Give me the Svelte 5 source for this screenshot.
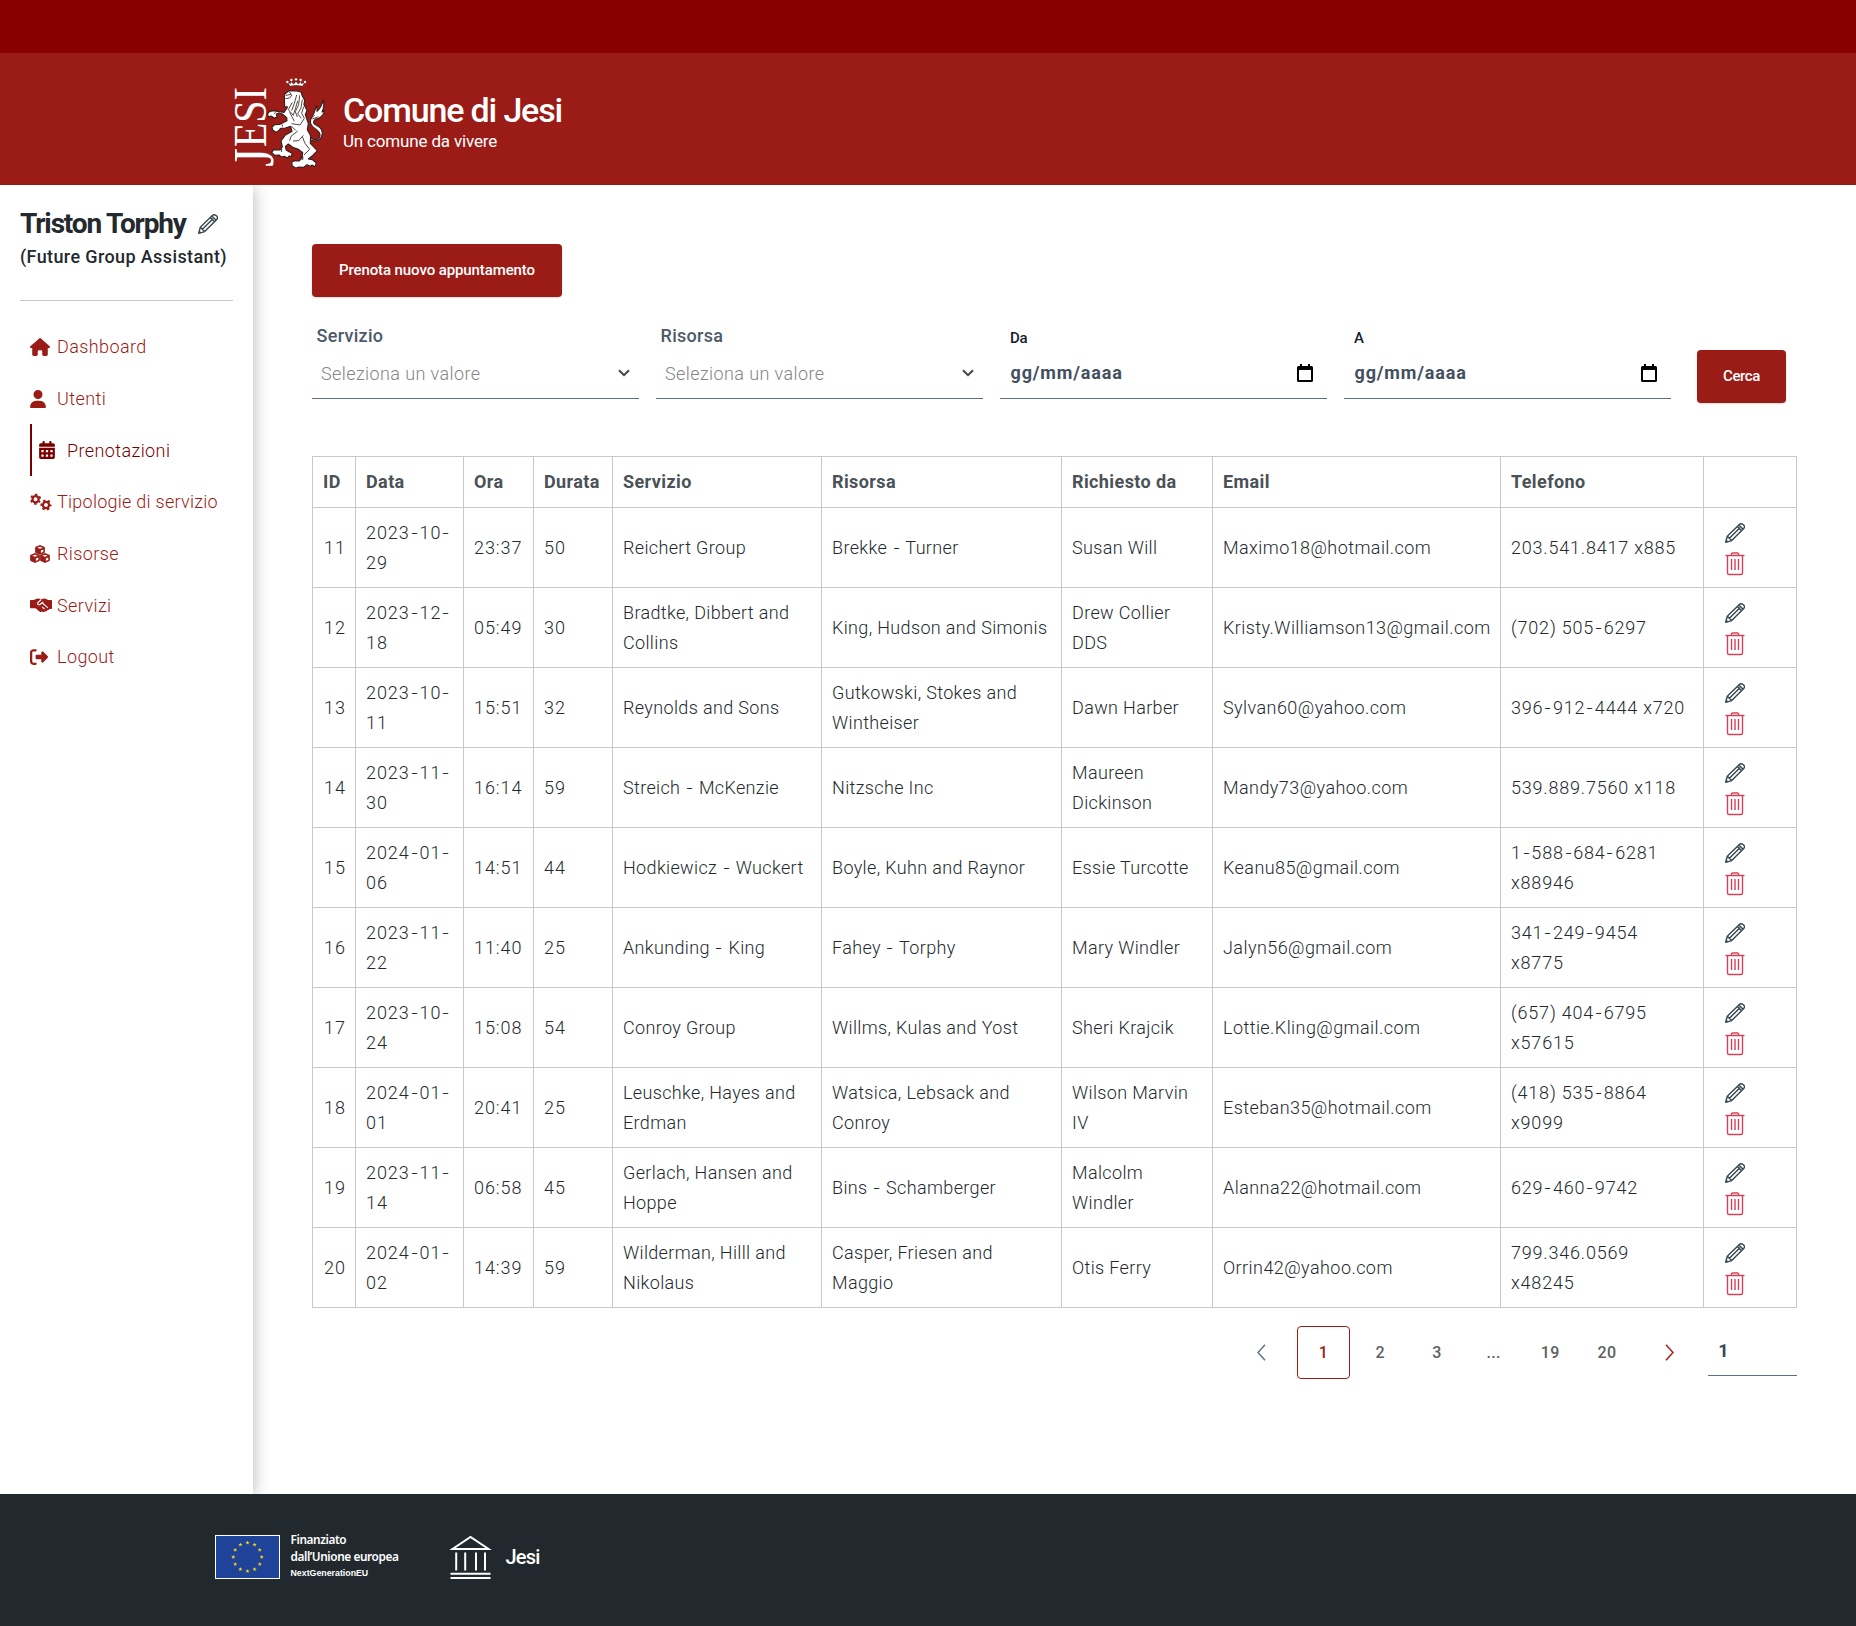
<script>
  const headers = ['ID', 'Data', 'Ora', 'Durata', 'Servizio', 'Risorsa', 'Richiesto da', 'Email', 'Telefono', ''];
  const columns = ['id', 'date', 'time', 'length', 'service', 'resource', 'person', 'email', 'phone', 'actions'];
  const rows = [
    ['11', '2023-10-\n29', '23:37', '50', 'Reichert Group', 'Brekke - Turner', 'Susan Will', 'Maximo18@hotmail.com', '203.541.8417 x885'],
    ['12', '2023-12-\n18', '05:49', '30', 'Bradtke, Dibbert and\nCollins', 'King, Hudson and Simonis', 'Drew Collier\nDDS', 'Kristy.Williamson13@gmail.com', '(702) 505-6297'],
    ['13', '2023-10-\n11', '15:51', '32', 'Reynolds and Sons', 'Gutkowski, Stokes and\nWintheiser', 'Dawn Harber', 'Sylvan60@yahoo.com', '396-912-4444 x720'],
    ['14', '2023-11-\n30', '16:14', '59', 'Streich - McKenzie', 'Nitzsche Inc', 'Maureen\nDickinson', 'Mandy73@yahoo.com', '539.889.7560 x118'],
    ['15', '2024-01-\n06', '14:51', '44', 'Hodkiewicz - Wuckert', 'Boyle, Kuhn and Raynor', 'Essie Turcotte', 'Keanu85@gmail.com', '1-588-684-6281\nx88946'],
    ['16', '2023-11-\n22', '11:40', '25', 'Ankunding - King', 'Fahey - Torphy', 'Mary Windler', 'Jalyn56@gmail.com', '341-249-9454\nx8775'],
    ['17', '2023-10-\n24', '15:08', '54', 'Conroy Group', 'Willms, Kulas and Yost', 'Sheri Krajcik', 'Lottie.Kling@gmail.com', '(657) 404-6795\nx57615'],
    ['18', '2024-01-\n01', '20:41', '25', 'Leuschke, Hayes and\nErdman', 'Watsica, Lebsack and\nConroy', 'Wilson Marvin\nIV', 'Esteban35@hotmail.com', '(418) 535-8864\nx9099'],
    ['19', '2023-11-\n14', '06:58', '45', 'Gerlach, Hansen and\nHoppe', 'Bins - Schamberger', 'Malcolm\nWindler', 'Alanna22@hotmail.com', '629-460-9742'],
    ['20', '2024-01-\n02', '14:39', '59', 'Wilderman, Hilll and\nNikolaus', 'Casper, Friesen and\nMaggio', 'Otis Ferry', 'Orrin42@yahoo.com', '799.346.0569\nx48245']
  ];
  const nav = [
    { label: 'Dashboard', icon: 'home' },
    { label: 'Utenti', icon: 'user' },
    { label: 'Prenotazioni', icon: 'calendar', active: true },
    { label: 'Tipologie di servizio', icon: 'gears' },
    { label: 'Risorse', icon: 'cubes' },
    { label: 'Servizi', icon: 'handshake' },
    { label: 'Logout', icon: 'logout' }
  ];
  const pages = ['1', '2', '3', '...', '19', '20'];
  const stars = Array.from({ length: 12 }, (_, i) => {
    const a = (i * Math.PI) / 6;
    return { x: 32.5 + 14.2 * Math.sin(a), y: 22 - 14.2 * Math.cos(a) };
  });
  const crownBeads = [[189, 38], [201, 32], [215, 30], [229, 32], [242, 38]];
</script>

{#snippet pencil()}
  <svg class="pencil" viewBox="0 0 20 20" aria-hidden="true">
    <path d="M.7 19.3 2.3 13.3 13.8 1.9Q16.1-.4 18.4 1.7T18 6.3L6.7 17.6ZM2.3 13.3l4.4 4.3M4.4 15.3 15 4.8M12.2 3.5l4.3 4.3M13.7 2l4.4 4.3M.7 19.3l1.9-.5-1.4-1.4Z" />
  </svg>
{/snippet}

{#snippet navIcon(name)}
  {#if name === 'home'}
    <svg class="fa" viewBox="0 0 576 512" width="20" height="18"><path d="M575.8 255.5c0 18-15 32.1-32 32.1h-32l.7 160.2c0 2.7-.2 5.4-.5 8.1V472c0 22.1-17.9 40-40 40H392c-22.1 0-40-17.9-40-40v-88c0-17.7-14.3-32-32-32h-64c-17.7 0-32 14.3-32 32v88c0 22.1-17.9 40-40 40h-80c-22.1 0-40-17.9-40-40V287.6H32c-18 0-32-14-32-32.1 0-9 3-17 10-24L266.4 8c7-7 15-8 22-8s15 2 21 7l255.4 224.500c8 7 12 15 11 24z" /></svg>
  {:else if name === 'user'}
    <svg class="fa" viewBox="0 0 448 512" width="16" height="18"><path d="M224 256A128 128 0 1 0 224 0a128 128 0 1 0 0 256zm-45.700 48C79.800 304 0 383.800 0 482.300 0 498.700 13.300 512 29.700 512h388.600c16.400 0 29.700-13.300 29.700-29.700C448 383.800 368.200 304 269.700 304z" /></svg>
  {:else if name === 'calendar'}
    <svg class="fa" viewBox="0 0 448 512" width="16" height="18"><path fill-rule="evenodd" d="M128 0c18 0 32 14 32 32v32h128V32c0-18 14-32 32-32s32 14 32 32v32h48c26 0 48 22 48 48v48H0v-48c0-26 22-48 48-48h48V32c0-18 14-32 32-32zM0 192h448v272c0 26-22 48-48 48H48c-26 0-48-22-48-48zM64 256v64h64v-64zM192 256v64h64v-64zM320 256v64h64v-64zM64 384v64h64v-64zM192 384v64h64v-64zM320 384v64h64v-64z" /></svg>
  {:else if name === 'gears'}
    <svg class="fa" viewBox="0 0 22 18" width="22" height="18">
      <g fill="none" stroke="currentColor">
        <circle cx="5.600" cy="6.200" r="3.100" stroke-width="2.300" />
        <circle cx="5.600" cy="6.200" r="4.700" stroke-width="1.700" stroke-dasharray="2.460 2.460" stroke-dashoffset="1.230" transform="rotate(30 5.600 6.200)" />
        <circle cx="16" cy="12" r="3.100" stroke-width="2.300" />
        <circle cx="16" cy="12" r="4.700" stroke-width="1.700" stroke-dasharray="2.460 2.460" stroke-dashoffset="1.230" />
      </g>
    </svg>
  {:else if name === 'cubes'}
    <svg class="fa" viewBox="0 0 20 18" width="20" height="18">
      {#each [[10, 4.700], [5, 12.700], [15, 12.700]] as [x, y]}
        <g transform="translate({x} {y})">
          <path d="M0-4.700 4.300-3Q4.900-2.700 4.900-2V2.300Q4.900 3 4.300 3.300L.5 5Q0 5.200-.5 5L-4.300 3.300Q-4.900 3-4.900 2.300V-2Q-4.900-2.700-4.300-3Z" />
          <path class="cut" d="M0-3 2.700-2 0-.900-2.700-2ZM.900 .800 3.300-.300V2L.900 3.200Z" />
        </g>
      {/each}
    </svg>
  {:else if name === 'handshake'}
    <svg class="fa" viewBox="0 0 22 18" width="22" height="18">
      <path d="M0 4.700Q0 4 .8 4H3.700L6.500 2.800Q8.500 2 10.300 3.100L11 3.500 12 2.900Q13.800 2 15.600 2.800L18.300 4h2.900Q22 4 22 4.700v7.600q0 .7-.8.700h-1.900q-.6 1.300-2 1.200-.8 1.500-2.500 1.200-1.200 1.300-2.700.2-1.300.8-2.600-.2L5.500 12.300H.8Q0 12.300 0 11.600Z" />
      <path class="line" d="M11.200 3.700 8 6.500q-1 1 .1 1.900 1.200.7 2.200-.1l1.800-1.500 5.800 5M12.200 6.800l1.100-.9M12.200 11l2.300 2.200" />
    </svg>
  {:else}
    <svg class="fa" viewBox="0 0 512 512" width="18" height="18"><path d="M377.900 105.900 500.700 228.700c7.200 7.200 11.300 17.100 11.300 27.300s-4.100 20.100-11.300 27.300L377.900 406.100c-6.400 6.400-15 9.900-24 9.900-18.700 0-33.900-15.200-33.900-33.900V320H192c-17.700 0-32-14.300-32-32v-64c0-17.700 14.300-32 32-32h128v-62.100c0-18.700 15.200-33.900 33.900-33.900 9 0 17.600 3.600 24 9.900zM160 96H96c-17.700 0-32 14.300-32 32v256c0 17.700 14.300 32 32 32h64c17.700 0 32 14.300 32 32s-14.300 32-32 32H96c-53 0-96-43-96-96V128C0 75 43 32 96 32h64c17.700 0 32 14.300 32 32s-14.300 32-32 32z" /></svg>
  {/if}
{/snippet}

<div class="page">
  <div class="slim"></div>
  <header>
    <svg class="crest" viewBox="0 0 315 315" aria-hidden="true">
      <text class="initial" transform="translate(145 290) rotate(-90)" textLength="56" lengthAdjust="spacingAndGlyphs">J</text>
      <text transform="translate(123 232) rotate(-90)" textLength="181" lengthAdjust="spacingAndGlyphs">ESI</text>
      <g class="lion">
        <path class="crown" d="M189 38q7 5 10 4l2-10q2 11 7 11 6-1 7-13 1 12 7 13 5 0 7-11l2 10q3 1 11-4l-7 13q-20-5-38 0Z" />
        {#each crownBeads as [x, y]}<circle cx={x} cy={y} r="3.6" />{/each}
        <path d="M247 200c24 16 40 13 40-3 0-17-23-18-28-34-5-18 10-24 12-38l6-17c1 8 2 11 1 18 10-7 14-19 20-34 2 16 0 27-5 36l8-4c-4 17-18 25-27 25-9 7-8 14 1 18 16 8 23 19 17 34-6 18-26 17-47 5Z" />
        <path d="M180 85l2-12 12-9 23 1 13 3 4 12 7 13-2 13 9 17-5 13 9 27-3 18 10 18-1 23 21 22-12 13-15 12 12 2 12 10-4 11-9-5-5 4-10-5-10 8-14-1-10 3-10-6-2-10 7-6 15 1 9-9 2-16-13-10-15-5-15-11-9 8 3 11 17 9-1 9-8-1-5 6-9-5-9 2-7-6-13 1-9-9 6-8 19 1 7-9-4-18 12-17 21-12-4-15-16 5-14 1-8 9-7 3-9-7-2-9 8-7 16-1 21-11-1-9-13-11-11-3-7 3 2 10-8 2-10-6-7 3-4-9 7-8 13-2 16 3 14 2 11-16-9-1Z" />
        <path class="fine" d="M194 67l7 8-16 3M183 88l13-2 7-9M204 99l-12 22 15 17 7-23 6-20M217 77l-7 25-8 22M226 78l-3 28-10 21 6 16M234 91l-4 25-10 17 11 14M238 112l-6 20 8 15M196 129l14 27M202 163l25 4 13-20M202 171l12 12M220 185l-20 16-4 13M237 198l-14 16-17 1M234 202l8 20 14 18-17 17M164 238l8 2M172 239l-1 9M225 265l11-3-1 10M260 148l11-11M282 142l-18 7M155 126l-5 7M173 165l2 7" />
      </g>
    </svg>
    <div class="brand">
      <h1>Comune di Jesi</h1>
      <p>Un comune da vivere</p>
    </div>
  </header>

  <div class="body">
    <aside>
      <div class="name"><h2>Triston Torphy</h2>{@render pencil()}</div>
      <p class="role">(Future Group Assistant)</p>
      <hr />
      <nav>
        {#each nav as item}
          <a class:active={item.active}>
            <span class="ico">{@render navIcon(item.icon)}</span><span>{item.label}</span>
          </a>
        {/each}
      </nav>
    </aside>

    <main>
      <button class="new">Prenota nuovo appuntamento</button>
      <div class="filters">
        {#each ['Servizio', 'Risorsa'] as label}
          <div class="field">
            <span class="label">{label}</span>
            <div class="select">
              <span>Seleziona un valore</span>
              <svg viewBox="0 0 12 8" width="12" height="8"><path d="m1 1.200 5 5 5-5" /></svg>
            </div>
          </div>
        {/each}
        {#each ['Da', 'A'] as label}
          <div class="field">
            <span class="label small">{label}</span>
            <div class="select date">
              <span>gg/mm/aaaa</span>
              <svg viewBox="0 0 16 18" width="16" height="18"><path fill-rule="evenodd" d="M3 0h2v2h6V0h2v2h1.500Q16 2 16 3.500v13Q16 18 14.500 18h-13Q0 18 0 16.500v-13Q0 2 1.500 2H3ZM2 6v10h12V6Z" /></svg>
            </div>
          </div>
        {/each}
        <button class="search">Cerca</button>
      </div>

      <table>
        <colgroup>{#each columns as c}<col class={c} />{/each}</colgroup>
        <thead>
          <tr>{#each headers as h}<th>{h}</th>{/each}</tr>
        </thead>
        <tbody>
          {#each rows as row}
            <tr>
              {#each row as cell, i}<td class="c-{columns[i]}">{#each cell.split('-') as part, k}{#if k}<span class="dash">-</span>{/if}{part}{/each}</td>{/each}
              <td class="tools">
                <div>
                  {@render pencil()}
                  <svg class="trash" viewBox="0 0 20 24" aria-hidden="true"><path d="M.5 3.500h19M6.500 3.500V2q0-1 1-1h5q1 0 1 1v1.500M2.500 3.500v17.500q0 1.500 1.500 1.500h12q1.500 0 1.500-1.500V3.500M6.500 7v11M10 7v11M13.500 7v11" /></svg>
                </div>
              </td>
            </tr>
          {/each}
        </tbody>
      </table>

      <div class="pager">
        <svg class="prev" viewBox="0 0 9 17"><path d="M8 .700 1 8.500l7 7.800" /></svg>
        {#each pages as p, i}<span class="pg" class:current={i === 0}>{p}</span>{/each}
        <svg class="next" viewBox="0 0 9 17"><path d="m1 .700 7 7.800-7 7.800" /></svg>
        <div class="goto">1</div>
      </div>
    </main>
  </div>

  <footer>
    <svg class="flag" viewBox="0 0 65 44" aria-hidden="true">
      <rect x=".5" y=".5" width="64" height="43" />
      {#each stars as s}
        <path transform="translate({s.x} {s.y})" d="M0-2.200.550-.700 2.100-.700.900.300 1.300 1.800 0 .900-1.300 1.800-.900.300-2.100-.700-.550-.700Z" />
      {/each}
    </svg>
    <div class="fund">
      <b>Finanziato</b>
      <b>dall’Unione europea</b>
      <small>NextGenerationEU</small>
    </div>
    <svg class="hall" viewBox="0 0 43 45" aria-hidden="true"><path d="M3.500 14 21.500 2l18 12ZM7.200 17.500v18M16.200 17.500v18M27 17.500v18M36 17.500v18M1.500 38.700h40M1.500 43h40" /></svg>
    <span class="town">Jesi</span>
  </footer>
</div>

<style>
  .page {
    display: flex;
    flex-direction: column;
    width: 1856px;
    height: 1626px;
    overflow: hidden;
    background: #fff;
    font-family: Roboto, 'Open Sans', sans-serif;
    color: #23292e;
  }
  h1, h2, p { margin: 0; }
  svg { flex: none; display: block; }
  .slim { height: 53px; background: #8a0000; flex: none; }
  header {
    height: 132px;
    flex: none;
    box-sizing: border-box;
    display: flex;
    padding: 17px 0 0 225px;
    background: #9b1c17;
    color: #fff;
  }
  .crest { width: 105px; height: 105px; overflow: visible; }
  .crest text { font-family: 'Liberation Serif', serif; font-size: 137px; fill: #fff; }
  .crest .initial { font-size: 170px; }
  .lion { transform: translate(-2px, -2px); }
  .lion path { fill: #fff; stroke: #35201f; stroke-width: 3.5; stroke-linejoin: round; }
  .lion circle { fill: #fff; }
  .lion .fine { fill: none; stroke-width: 2.5; }
  .lion .crown { stroke-width: 2; }
  .brand { padding: 19px 0 0 13px; }
  h1 { font-size: 34px; line-height: 42px; font-weight: 500; letter-spacing: -1.15px; white-space: nowrap; }
  .brand p { font-size: 17px; line-height: 20px; letter-spacing: -0.17px; }
  .body { display: flex; height: 1309px; flex: none; }
  aside {
    width: 253px;
    box-sizing: border-box;
    flex: none;
    padding: 20px 20px 0;
    box-shadow: 0 2px 16px rgba(0, 0, 0, 0.3);
    clip-path: inset(0 -20px 0 0);
  }
  .name { display: flex; align-items: center; gap: 12px; height: 38px; }
  h2 { font-size: 28px; line-height: 38px; font-weight: 700; letter-spacing: -1.15px; white-space: nowrap; }
  .pencil { width: 20px; height: 20px; fill: none; stroke: #37474f; stroke-width: 1.4; stroke-linejoin: round; }
  .role { font-size: 18px; font-weight: 500; line-height: 28px; letter-spacing: 0.38px; white-space: nowrap; }
  hr { margin: 29px 0 20px; border: 0; border-top: 1px solid #c6c6c6; }
  nav { padding-left: 10px; }
  nav a {
    display: flex;
    align-items: center;
    height: 51.7px;
    color: #9b1c17;
    font-size: 18px;
    font-weight: 300;
    letter-spacing: 0.4px;
    white-space: nowrap;
  }
  nav a:nth-child(4) { letter-spacing: 0.26px; }
  nav .ico { width: 27px; flex: none; }
  nav .active { border-left: 2px solid #7a0000; color: #7a0000; padding-left: 7px; }
  nav .active .ico { width: 28px; }
  .fa { fill: currentColor; }
  .cut { fill: #fff; }
  .line { fill: none; stroke: #fff; stroke-width: 1.1; }
  main { flex: 1; padding: 59px 59px 0; }
  button {
    display: block;
    height: 53px;
    padding: 0 0 2px;
    border: 0;
    border-radius: 4px;
    background: #9b1c17;
    color: #fff;
    font: 500 15px Roboto, sans-serif;
    letter-spacing: -0.1px;
    box-shadow: 0 1px 2px rgba(0, 0, 0, 0.15);
  }
  .new { width: 250px; }
  .filters { display: flex; gap: 17px; height: 102px; margin-bottom: 57px; }
  .field { width: 327px; display: flex; flex-direction: column; }
  .label { padding: 25.5px 0 0 4.5px; height: 50px; box-sizing: border-box; font-size: 18px; line-height: 26px; font-weight: 500; letter-spacing: 0.3px; color: #4c5968; }
  .label.small { padding: 28px 0 0 10px; font-size: 15px; letter-spacing: -0.2px; color: #17202a; }
  .select {
    display: flex;
    align-items: center;
    justify-content: space-between;
    height: 52px;
    box-sizing: border-box;
    padding: 1px 9px 0;
    border-bottom: 1px solid #5d7083;
    font-size: 18px;
    font-weight: 300;
    letter-spacing: 0.4px;
    color: #858585;
  }
  .select svg path { fill: none; stroke: #444; stroke-width: 2; }
  .date { padding: 0 14px 0 10.5px; font-weight: 700; letter-spacing: 0.85px; color: #435060; }
  .select.date svg path { fill: #000; stroke: none; }
  .search { width: 89px; margin: 53px 0 0 9px; letter-spacing: -0.4px; }
  table { width: 1485px; table-layout: fixed; border-collapse: collapse; font-size: 18px; }
  th, td {
    box-sizing: border-box;
    border: 1px solid #c8c8c8;
    padding: 0 0 0 10px;
    text-align: left;
    white-space: pre;
    line-height: 30px;
    font-weight: 300;
    letter-spacing: 0.35px;
    color: #23292e;
  }
  th { height: 51px; font-weight: 700; letter-spacing: 0.4px; color: #4a5157; }
  td { height: 80px; }
  .c-id { padding-left: 11px; }
  .c-id, .c-date, .c-time, .c-length { letter-spacing: 0.95px; }
  .c-phone { letter-spacing: 0.8px; }
  .c-email { letter-spacing: 0.43px; }
  .dash { display: inline-block; margin: 0 1.8px; transform: scaleX(1.2); }
  col.id { width: 43px; }
  col.date { width: 108px; padding: 0; }
  col.time { width: 70px; }
  col.length { width: 79px; }
  col.service { width: 209px; }
  col.resource { width: 240px; }
  col.person { width: 151px; }
  col.email { width: 288px; }
  col.phone { width: 203px; }
  col.actions { width: 93px; }
  td.tools { padding: 3px 0 0 21px; line-height: 0; }
  .tools div { display: flex; flex-direction: column; gap: 9px; }
  .trash { width: 20px; height: 24px; fill: none; stroke: #d1435b; stroke-width: 1.4; }
  .pager { display: flex; align-items: center; height: 53px; margin-top: 18px; }
  .pager svg { width: 9px; height: 17px; fill: none; stroke-width: 1.6; }
  .pager .prev { margin: 0 31px 0 945px; stroke: #66788a; }
  .pager .next { margin: 0 34px 0 28px; stroke: #b0231e; }
  .pg {
    width: 53px;
    height: 53px;
    box-sizing: border-box;
    margin-right: 3.7px;
    text-align: center;
    font-size: 16px;
    line-height: 53px;
    font-weight: 500;
    letter-spacing: 0.3px;
    color: #5e6061;
  }
  .pg.current { border: 1px solid #9b1c17; border-radius: 4px; line-height: 51px; color: #9b1c17; }
  .goto {
    width: 89px;
    height: 50px;
    align-self: flex-start;
    box-sizing: border-box;
    padding-left: 10px;
    border-bottom: 1px solid #5d7083;
    font-size: 18px;
    line-height: 49px;
    font-weight: 700;
    color: #37475a;
  }
  footer {
    height: 132px;
    flex: none;
    box-sizing: border-box;
    display: flex;
    align-items: flex-start;
    padding: 41px 0 0 215px;
    background: #22292e;
    color: #fff;
  }
  .flag { width: 65px; height: 44px; }
  .flag rect { fill: #1e4398; stroke: #fff; stroke-width: 1; }
  .flag path { fill: #f5d315; }
  .fund { width: 158px; padding-left: 10.5px; margin-top: -4px; display: flex; flex-direction: column; white-space: nowrap; }
  .fund b { font: 600 11.8px/17px 'Noto Sans', sans-serif; height: 17.3px; letter-spacing: -0.4px; }
  .fund small { font: 700 8.8px/15px 'Liberation Sans', sans-serif; }
  .hall { width: 43px; height: 45px; }
  .hall path { fill: none; stroke: #fff; stroke-width: 2; }
  .town { padding-left: 14px; font-size: 20px; line-height: 44px; font-weight: 500; letter-spacing: -0.8px; }
</style>
